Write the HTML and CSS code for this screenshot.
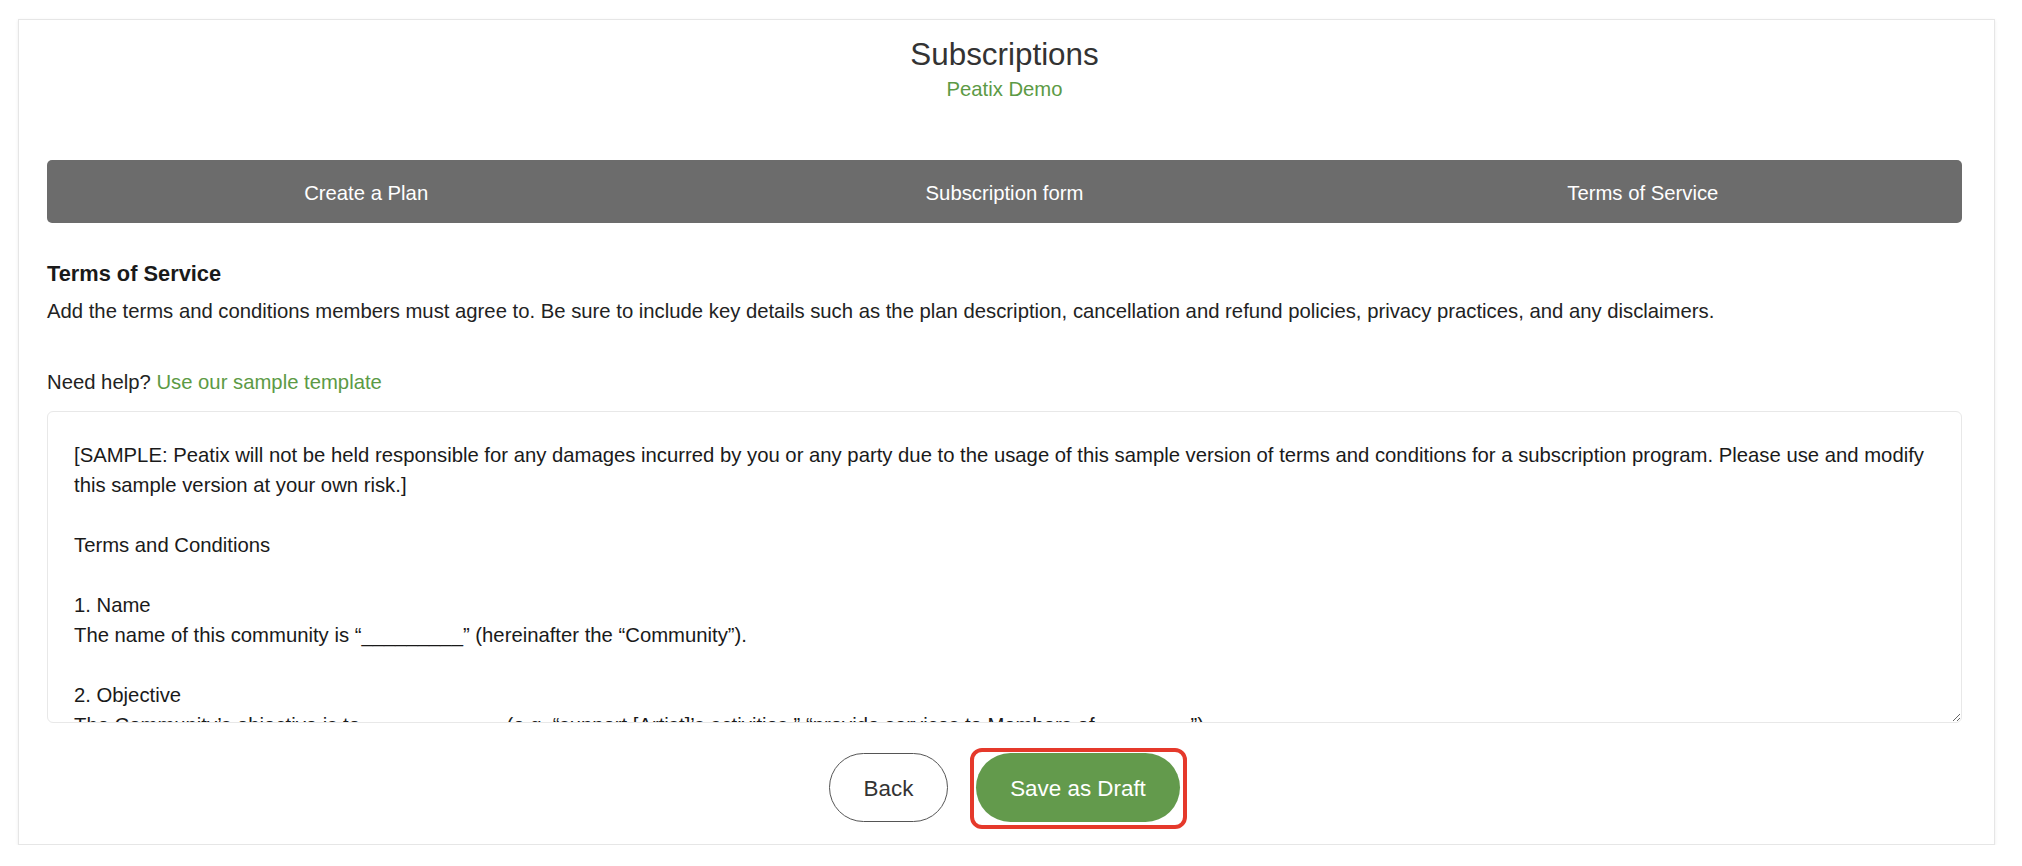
FILE: index.html
```html
<!DOCTYPE html>
<html lang="en">
<head>
<meta charset="utf-8">
<title>Subscriptions</title>
<link rel="stylesheet" href="styles.css">
</head>
<body>
<div class="card">
  <header class="page-head">
    <h1 class="title">Subscriptions</h1>
    <div class="org">Peatix Demo</div>
  </header>

  <nav class="steps">
    <div class="step">Create a Plan</div>
    <div class="step">Subscription form</div>
    <div class="step">Terms of Service</div>
  </nav>

  <section class="tos">
    <h2 class="tos-title">Terms of Service</h2>
    <p class="tos-desc">Add the terms and conditions members must agree to. Be sure to include key details such as the plan description, cancellation and refund policies, privacy practices, and any disclaimers.</p>
    <p class="help">Need help? <a class="link" href="#">Use our sample template</a></p>
    <textarea class="terms">[SAMPLE: Peatix will not be held responsible for any damages incurred by you or any party due to the usage of this sample version of terms and conditions for a subscription program. Please use and modify
this sample version at your own risk.]

Terms and Conditions

1. Name
The name of this community is “_________” (hereinafter the “Community”).

2. Objective
The Community’s objective is to ____________ (e.g. “support [Artist]’s activities,” “provide services to Members of ________”).</textarea>
  </section>

  <div class="actions">
    <button class="btn btn-back" type="button">Back</button>
    <span class="highlight"><button class="btn btn-save" type="button">Save as Draft</button></span>
  </div>
</div>
</body>
</html>
```

FILE: styles.css
```css
* { box-sizing: border-box; }

html, body { background: #ffffff; }

body {
  margin: 0;
  font-family: "Liberation Sans", Arial, Helvetica, sans-serif;
  color: #222222;
}

.card {
  margin: 19px 27px 0 18px;
  border: 1px solid #e6e6e6;
  box-shadow: 0 1px 3px rgba(0, 0, 0, 0.08);
  background: #ffffff;
  padding: 17px 32px 22px 28px;
}

.page-head {
  text-align: center;
}

.title {
  margin: 0;
  font-size: 31.4px;
  line-height: 36px;
  font-weight: normal;
  color: #333333;
}

.org {
  margin-top: 3px;
  font-size: 20.3px;
  line-height: 26px;
  color: #5c9a45;
}

.steps {
  margin-top: 58px;
  height: 63px;
  display: grid;
  grid-template-columns: repeat(3, 1fr);
  background: #6c6c6c;
  border-radius: 5px;
}

.step {
  display: flex;
  align-items: center;
  justify-content: center;
  padding-top: 4px;
  color: #ffffff;
  font-size: 20.3px;
}

.tos-title {
  margin: 38px 0 0;
  font-size: 21.8px;
  line-height: 26px;
  font-weight: bold;
  color: #1a1a1a;
}

.tos-desc {
  margin: 11px 0 0;
  font-size: 20.3px;
  line-height: 26px;
  color: #222222;
}

.help {
  margin: 45px 0 0;
  font-size: 20.3px;
  line-height: 26px;
  color: #222222;
}

.link {
  color: #5c9a45;
  text-decoration: none;
}

.terms {
  display: block;
  margin-top: 16px;
  width: 100%;
  height: 312px;
  padding: 28px 10px 10px 26px;
  border: 1px solid #e8e8e8;
  border-radius: 6px;
  font-family: "Liberation Sans", Arial, Helvetica, sans-serif;
  font-size: 20.3px;
  line-height: 30px;
  color: #1a1a1a;
  background: #ffffff;
  white-space: pre;
  overflow: hidden;
  resize: vertical;
  outline: none;
}

.actions {
  margin-top: 30px;
  display: flex;
  justify-content: center;
  gap: 28px;
}

.btn {
  height: 69px;
  border-radius: 35px;
  font-family: "Liberation Sans", Arial, Helvetica, sans-serif;
  font-size: 22.4px;
  cursor: pointer;
  padding: 2px 0 0;
}

.btn-back {
  width: 119px;
  border: 1px solid #555555;
  background: #ffffff;
  color: #333333;
}

.btn-save {
  width: 204px;
  border: none;
  background: #639a4c;
  color: #ffffff;
  display: block;
}

.highlight {
  position: relative;
  display: block;
}

.highlight::after {
  content: "";
  position: absolute;
  top: -5px;
  right: -7px;
  bottom: -7px;
  left: -6px;
  border: 4px solid #e5392b;
  border-radius: 12px;
  pointer-events: none;
}
```
